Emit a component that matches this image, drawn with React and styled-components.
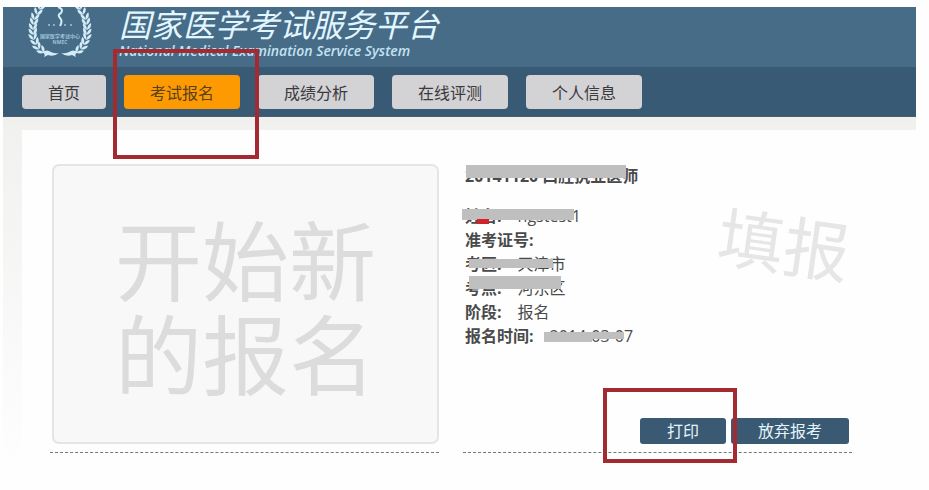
import React from 'react';
import styled, { createGlobalStyle } from 'styled-components';

const GlobalStyle = createGlobalStyle`
    * {
        box-sizing: border-box;
    }
    body {
        margin: 0;
        background-color: #fefefe;
        color: #4a4a4a;
        font-family: "Open Sans", "Noto Sans CJK SC", sans-serif;
        font-size: 16px;
    }
    button {
        font-family: inherit;
        font-size: 16px;
        cursor: pointer;
    }
`;

const Page = styled.div`
    margin: 7px 13px 0 3px;
`;

const Header = styled.header`
    display: flex;
    height: 60px;
    padding-left: 24px;
    gap: 26px;
    background-color: #466c87;
`;

const Emblem = styled.svg`
    flex: none;
    width: 66px;
    height: 52px;
`;

const Brand = styled.div`
    color: #e2f6ff;
    font-style: italic;
    white-space: nowrap;
`;

const SiteName = styled.h1`
    margin: 0;
    font-size: 32px;
    font-weight: 400;
    line-height: 36px;
`;

const SiteNameEn = styled.p`
    margin: 0;
    color: #c5e2f2;
    font-size: 14px;
    font-weight: 600;
    line-height: 16px;
`;

const Nav = styled.nav`
    display: flex;
    gap: 18px;
    padding: 8px 19px 7px;
    background-color: #395a74;
    border-bottom: 1px solid #4c5f69;
`;

const Marked = styled.div`
    position: relative;
`;

const Mark = styled.span`
    position: absolute;
    top: ${(props) => props.$top}px;
    right: ${(props) => props.$right}px;
    bottom: ${(props) => props.$bottom}px;
    left: ${(props) => props.$left}px;
    border: 4px solid #a32a30;
    pointer-events: none;
    z-index: 2;
`;

const Tab = styled.button`
    height: 34px;
    padding: 0 26px;
    border: none;
    border-radius: 4px;
    background-color: ${(props) => (props.$active ? '#fd9a02' : '#d3d2d4')};
    color: ${(props) => (props.$active ? '#57401c' : '#3c3a3d')};
    white-space: nowrap;
`;

const Main = styled.main`
    padding: 13px 0 0 19px;
    background: linear-gradient(#efefee, #f1f1f0 13px, #fefefe 350px);
`;

const Sheet = styled.div`
    display: grid;
    grid-template-columns: 1fr 1fr;
    gap: 24px;
    padding: 34px 64px 20px 28px;
    background-color: #fefefe;
`;

const Column = styled.section`
    display: flex;
    flex-direction: column;
    padding-bottom: 8px;
    border-bottom: 1px dashed #777;
`;

const NewEntry = styled.button`
    height: 280px;
    margin-left: 2px;
    padding: 8px 0 0;
    border: 2px solid #e4e5e5;
    border-radius: 7px;
    background-color: #f8f8f8;
    color: #dcdcdc;
`;

const NewEntryText = styled.span`
    display: block;
    font-size: 87px;
    font-weight: 400;
    line-height: 94px;
`;

const Summary = styled.div`
    display: flex;
    justify-content: space-between;
    padding-left: 2px;
`;

const SummaryTitle = styled.h2`
    margin: 0 0 16px;
    font-size: 16px;
    line-height: 24px;
    white-space: nowrap;
`;

const Fields = styled.dl`
    margin: 0;
`;

const Field = styled.div`
    display: flex;
    gap: 16px;
    line-height: 24px;
    white-space: nowrap;
`;

const Label = styled.dt`
    font-weight: 700;
`;

const Value = styled.dd`
    margin: 0;
`;

const Covered = styled.div`
    position: relative;
    width: max-content;
`;

const Cover = styled.span`
    position: absolute;
    top: ${(props) => props.$top}px;
    left: ${(props) => props.$left}px;
    width: ${(props) => props.$width}px;
    height: ${(props) => props.$height}px;
    background-color: ${(props) => props.$color || '#bfbfbf'};
`;

const Stamp = styled.div`
    align-self: flex-start;
    margin: 48px 2px 0 0;
    color: #e6e6e6;
    font-size: 66px;
    line-height: 64px;
    white-space: nowrap;
    transform: rotate(8deg);
`;

const Actions = styled.div`
    display: flex;
    justify-content: flex-end;
    gap: 5px;
    margin-top: auto;
    padding-right: 3px;
`;

const Action = styled.button`
    height: 26px;
    padding: 0 27px;
    border: none;
    border-radius: 3px;
    background-color: #3a5a73;
    color: #e4f4fb;
    line-height: 26px;
    white-space: nowrap;
`;

const tabs = ['首页', '考试报名', '成绩分析', '在线评测', '个人信息'];

const fields = [
    {
        label: '姓名:',
        value: 'ngstest1',
        covers: [
            { $top: 5, $left: -3, $width: 112, $height: 11 },
            { $top: 15, $left: 12, $width: 12, $height: 5, $color: '#d0242a' },
        ],
    },
    { label: '准考证号:', value: '', covers: [] },
    { label: '考区:', value: '天津市', covers: [{ $top: 7, $left: 4, $width: 84, $height: 9 }] },
    { label: '考点:', value: '河东区', covers: [{ $top: 0, $left: 4, $width: 92, $height: 13 }] },
    { label: '阶段:', value: '报名', covers: [] },
    {
        label: '报名时间:',
        value: '2014-03-07',
        covers: [
            { $top: 8, $left: 79, $width: 48, $height: 10 },
            { $top: 8, $left: 126, $width: 33, $height: 7 },
        ],
    },
];

// x, y and angle of the leaves on the left branch, top to bottom
const leaves = [
    [14, -1, 25], [11, 4, 18], [8, 9, 12], [7, 14, 6], [6, 19, 0], [6, 24, -6],
    [6, 29, -14], [8, 34, -24], [10, 39, -34], [14, 43, -46],
];

const Branch = () => (
    <g fill="#d3ecf7">
        {leaves.map(([x, y, angle]) => (
            <g key={y} transform={`translate(${x} ${y}) rotate(${angle})`}>
                <path d="M0 4 Q-5 2 -4 -3 Q0 -1 0 4Z" />
                <path d="M0 4 Q5 2 4 -3 Q0 -1 0 4Z" />
            </g>
        ))}
        <path d="M15 45 Q20 42 24 45 Q28 47 32 46 Q27 50 21 48 L17 50 Q19 47 15 45Z" />
    </g>
);

const EmblemMark = () => (
    <Emblem viewBox="0 0 66 52" role="img" aria-label="国家医学考试中心">
        <Branch />
        <g transform="translate(66 0) scale(-1 1)">
            <Branch />
        </g>
        <path
            d="M31 0 Q37 2 34 6 Q30 8 33 11 Q36 14 33 19"
            fill="none"
            stroke="#d3ecf7"
            strokeWidth="2"
        />
        <g fill="#9fc3d8">
            <circle cx="22" cy="18" r="1" />
            <circle cx="27" cy="18" r="1" />
            <circle cx="38" cy="18" r="1" />
            <circle cx="44" cy="18" r="1" />
        </g>
        <g fill="#9fc3d8" textAnchor="middle" fontWeight="700">
            <text x="33" y="31" fontSize="5">国家医学考试中心</text>
            <text x="33" y="37" fontSize="5">NMEC</text>
        </g>
    </Emblem>
);

const App = () => {
    return (
        <>
            <GlobalStyle />
            <Page>
                <Header>
                    <EmblemMark />
                    <Brand>
                        <SiteName>国家医学考试服务平台</SiteName>
                        <SiteNameEn>National Medical Examination Service System</SiteNameEn>
                    </Brand>
                </Header>
                <Nav>
                    {tabs.map((tab, i) => (
                        <Marked key={tab}>
                            <Tab type="button" $active={i === 1}>{tab}</Tab>
                            {i === 1 && <Mark $top={-26} $right={-19} $bottom={-50} $left={-11} />}
                        </Marked>
                    ))}
                </Nav>
                <Main>
                    <Sheet>
                        <Column>
                            <NewEntry type="button">
                                <NewEntryText>开始新</NewEntryText>
                                <NewEntryText>的报名</NewEntryText>
                            </NewEntry>
                        </Column>
                        <Column>
                            <Summary>
                                <div>
                                    <Covered>
                                        <SummaryTitle>20141120 口腔执业医师</SummaryTitle>
                                        <Cover $top={1} $left={1} $width={160} $height={13} />
                                    </Covered>
                                    <Fields>
                                        {fields.map((field) => (
                                            <Covered key={field.label}>
                                                <Field>
                                                    <Label>{field.label}</Label>
                                                    <Value>{field.value}</Value>
                                                </Field>
                                                {field.covers.map((cover) => (
                                                    <Cover key={cover.$left} {...cover} />
                                                ))}
                                            </Covered>
                                        ))}
                                    </Fields>
                                </div>
                                <Stamp>填报</Stamp>
                            </Summary>
                            <Actions>
                                <Marked>
                                    <Action type="button">打印</Action>
                                    <Mark $top={-30} $right={-11} $bottom={-19} $left={-37} />
                                </Marked>
                                <Action type="button">放弃报考</Action>
                            </Actions>
                        </Column>
                    </Sheet>
                </Main>
            </Page>
        </>
    );
};

export default App;
